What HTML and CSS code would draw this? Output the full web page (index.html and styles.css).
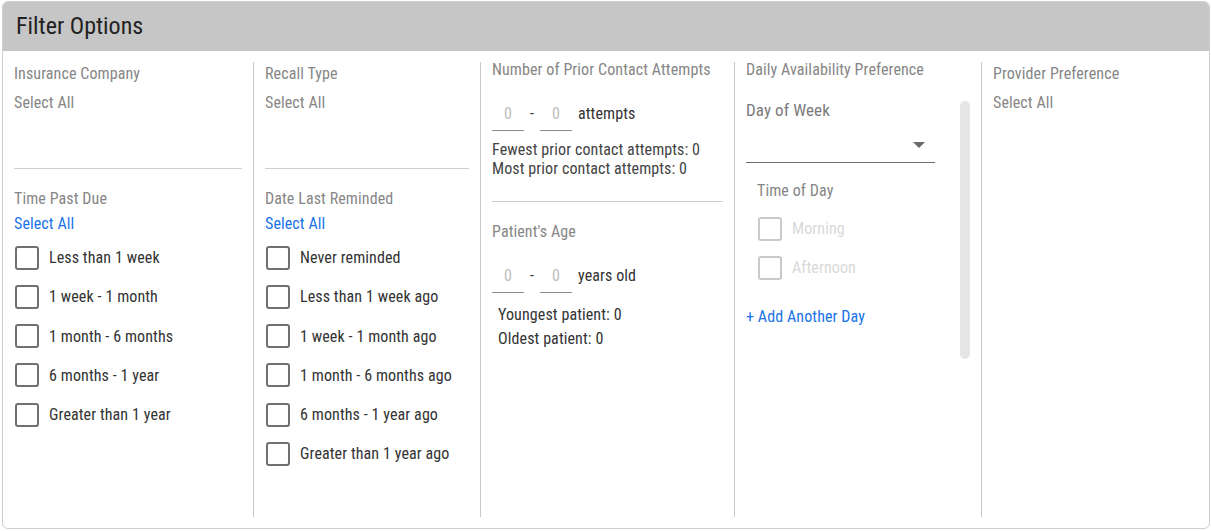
FILE: index.html
```html
<!DOCTYPE html>
<html>
<head>
<meta charset="utf-8">
<link rel="stylesheet" href="styles.css">
</head>
<body>
<div class="card">
  <div class="card-header">Filter Options</div>
  <div class="card-body">
    <div class="col">
      <div class="lbl">Insurance Company</div>
      <div class="sel-all gray">Select All</div>
      <hr class="sep sep1">
      <div class="lbl">Time Past Due</div>
      <div class="sel-all blue">Select All</div>
      <ul class="checks">
        <li><span class="box"></span>Less than 1 week</li>
        <li><span class="box"></span>1 week - 1 month</li>
        <li><span class="box"></span>1 month - 6 months</li>
        <li><span class="box"></span>6 months - 1 year</li>
        <li><span class="box"></span>Greater than 1 year</li>
      </ul>
    </div>
    <div class="col">
      <div class="lbl">Recall Type</div>
      <div class="sel-all gray">Select All</div>
      <hr class="sep sep1">
      <div class="lbl">Date Last Reminded</div>
      <div class="sel-all blue">Select All</div>
      <ul class="checks">
        <li><span class="box"></span>Never reminded</li>
        <li><span class="box"></span>Less than 1 week ago</li>
        <li><span class="box"></span>1 week - 1 month ago</li>
        <li><span class="box"></span>1 month - 6 months ago</li>
        <li><span class="box"></span>6 months - 1 year ago</li>
        <li><span class="box"></span>Greater than 1 year ago</li>
      </ul>
    </div>
    <div class="col">
      <div class="lbl up">Number of Prior Contact Attempts</div>
      <div class="range">
        <span class="num">0</span><span class="dash">-</span><span class="num">0</span><span class="unit">attempts</span>
      </div>
      <div class="stats">
        <div>Fewest prior contact attempts: 0</div>
        <div>Most prior contact attempts: 0</div>
      </div>
      <hr class="sep sep2">
      <div class="lbl">Patient's Age</div>
      <div class="range range2">
        <span class="num">0</span><span class="dash">-</span><span class="num">0</span><span class="unit">years old</span>
      </div>
      <div class="stats stats2">
        <div>Youngest patient: 0</div>
        <div>Oldest patient: 0</div>
      </div>
    </div>
    <div class="col">
      <div class="lbl up">Daily Availability Preference</div>
      <div class="scroll-area">
        <div class="day-block">
          <div class="dow">Day of Week</div>
          <div class="select"><span class="caret"></span></div>
          <div class="tod">Time of Day</div>
          <ul class="checks disabled">
            <li><span class="box"></span>Morning</li>
            <li><span class="box"></span>Afternoon</li>
          </ul>
          <div class="add-day">+ Add Another Day</div>
        </div>
        <div class="scrollbar"></div>
      </div>
    </div>
    <div class="col last">
      <div class="lbl">Provider Preference</div>
      <div class="sel-all gray">Select All</div>
    </div>
  </div>
</div>
</body>
</html>
```
FILE: styles.css
```css
html, body {
  margin: 0;
  padding: 0;
  background: #ffffff;
}
body {
  font-family: Roboto, "Liberation Sans", sans-serif;
  font-size: 17px;
  font-stretch: 87%;
  letter-spacing: 0.1px;
  color: #333;
}
.card {
  margin: 1px 1px 0 2px;
  width: 1208px;
  height: 528px;
  box-sizing: border-box;
  border: 1px solid #cfcfcf;
  border-radius: 6px;
  overflow: hidden;
  display: flex;
  flex-direction: column;
}
.card-header {
  height: 49px;
  flex: none;
  background: #c6c6c6;
  color: #222;
  font-size: 24px;
  font-stretch: 85%;
  letter-spacing: 0;
  line-height: 48px;
  padding-left: 13px;
}
.card-body {
  flex: 1;
  display: grid;
  grid-template-columns: 251px 227px 254px 247px 1fr;
  padding: 11px 0 11px 0;
  min-height: 0;
}
.col {
  border-right: 1px solid #c8c8c8;
  padding: 2px 11px 0 11px;
  min-width: 0;
}
.col.last {
  border-right: none;
}
.lbl {
  color: #868686;
  line-height: 20px;
  font-size: 16px;
}
.lbl.up {
  margin-top: -4px;
}
.sel-all {
  margin-top: 9px;
  line-height: 20px;
  font-size: 16px;
}
.gray { color: #868686; }
.blue { color: #1a73e8; }
.sep {
  border: none;
  border-top: 1px solid #cfcfcf;
  margin: 0;
}
.sep1 {
  margin-top: 55px;
  margin-bottom: 20px;
}
.sep1 + .lbl + .sel-all {
  margin-top: 5px;
}
.checks {
  list-style: none;
  margin: 4px 0 0 0;
  padding: 0;
}
.checks li {
  display: flex;
  align-items: center;
  height: 39.25px;
  color: #333;
  font-size: 16px;
}
.box {
  width: 24px;
  height: 24px;
  box-sizing: border-box;
  border: 2px solid #707070;
  border-radius: 3px;
  margin-left: 1px;
  margin-right: 10px;
  flex: none;
}
.range {
  display: flex;
  align-items: flex-end;
  margin-top: 19px;
  height: 32px;
  font-size: 16px;
}
.num {
  width: 32px;
  height: 32px;
  box-sizing: border-box;
  border-bottom: 1px solid #8a8a8a;
  color: #bdbdbd;
  text-align: center;
  line-height: 30px;
}
.dash {
  width: 16px;
  text-align: center;
  line-height: 30px;
  align-self: flex-start;
  color: #333;
}
.unit {
  margin-left: 6px;
  line-height: 30px;
  align-self: flex-start;
  color: #333;
}
.stats {
  margin-top: 9px;
  line-height: 19px;
  color: #444;
  font-size: 16px;
}
.sep2 {
  margin-top: 23px;
  margin-bottom: 20px;
}
.range2 {
  margin-top: 19px;
}
.stats2 {
  margin-top: 10px;
  padding-left: 6px;
  line-height: 24px;
  color: #333;
}
.scroll-area {
  display: flex;
  margin-top: 21px;
  height: 258px;
}
.day-block {
  width: 189px;
  flex: none;
}
.dow {
  font-size: 17px;
  color: #7a7a7a;
  line-height: 20px;
  margin-top: -1px;
}
.select {
  height: 32px;
  margin-top: 10px;
  border-bottom: 1px solid #6f6f6f;
  display: flex;
  justify-content: flex-end;
  align-items: center;
  padding-right: 10px;
}
.caret {
  width: 0;
  height: 0;
  border-left: 6.5px solid transparent;
  border-right: 6.5px solid transparent;
  border-top: 6.5px solid #6a6a6a;
  margin-top: -3px;
}
.tod {
  margin-top: 18px;
  margin-left: 11px;
  color: #868686;
  line-height: 20px;
  font-size: 16px;
}
.checks.disabled {
  margin-top: 8px;
  margin-left: 11px;
}
.checks.disabled li {
  height: 39px;
  color: #d9d9d9;
}
.checks.disabled .box {
  border-color: #c9c9c9;
  margin-left: 1px;
}
.add-day {
  margin-top: 20px;
  color: #1a73e8;
  line-height: 20px;
  font-size: 16px;
}
.scrollbar {
  margin-left: auto;
  width: 10px;
  background: #e6e6e6;
  border-radius: 5px;
}
```
